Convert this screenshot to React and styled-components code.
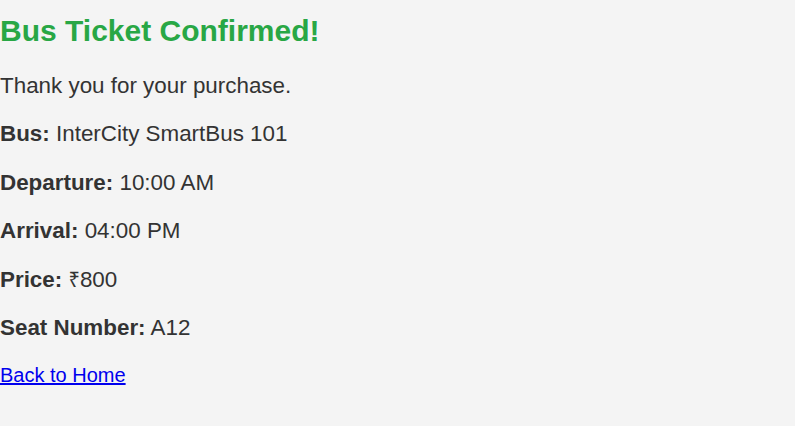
import React from "react";
import styled, { createGlobalStyle } from "styled-components";

const Global = createGlobalStyle`
  html, body {
    margin: 0;
    padding: 0;
    background: #f4f4f4;
  }
  body {
    font-family: "Liberation Sans", Arial, sans-serif;
    color: #333;
  }
`;

const Page = styled.div`
  padding: 0;
  font-size: 20px;
  line-height: normal;
  display: flow-root;
`;

const Title = styled.h1`
  color: #28a745;
  font-size: 30px;
  font-weight: bold;
  margin: 14px 0 25px;
  line-height: normal;
`;

const Line = styled.p`
  margin: 22.4px 0;
  font-size: 22.4px;
  line-height: 26px;
`;

const Label = styled.strong`
  font-weight: bold;
`;

const Rupee = styled.span`
  font-family: "Noto Sans", "DejaVu Sans", sans-serif;
  font-size: 20px;
`;

const HomeLink = styled.a`
  display: inline-block;
  margin-top: 1px;
  color: #0000ee;
  text-decoration: underline;
  font-size: 20px;
`;

const details = [
  ["Bus:", "InterCity SmartBus 101"],
  ["Departure:", "10:00 AM"],
  ["Arrival:", "04:00 PM"],
  ["Price:", <><Rupee>₹</Rupee>800</>],
  ["Seat Number:", "A12"],
];

export default function App() {
  return (
    <Page>
      <Global />
      <Title>Bus Ticket Confirmed!</Title>
      <Line>Thank you for your purchase.</Line>
      {details.map(([k, v]) => (
        <Line key={k}>
          <Label>{k}</Label> {v}
        </Line>
      ))}
      <HomeLink href="#">Back to Home</HomeLink>
    </Page>
  );
}
